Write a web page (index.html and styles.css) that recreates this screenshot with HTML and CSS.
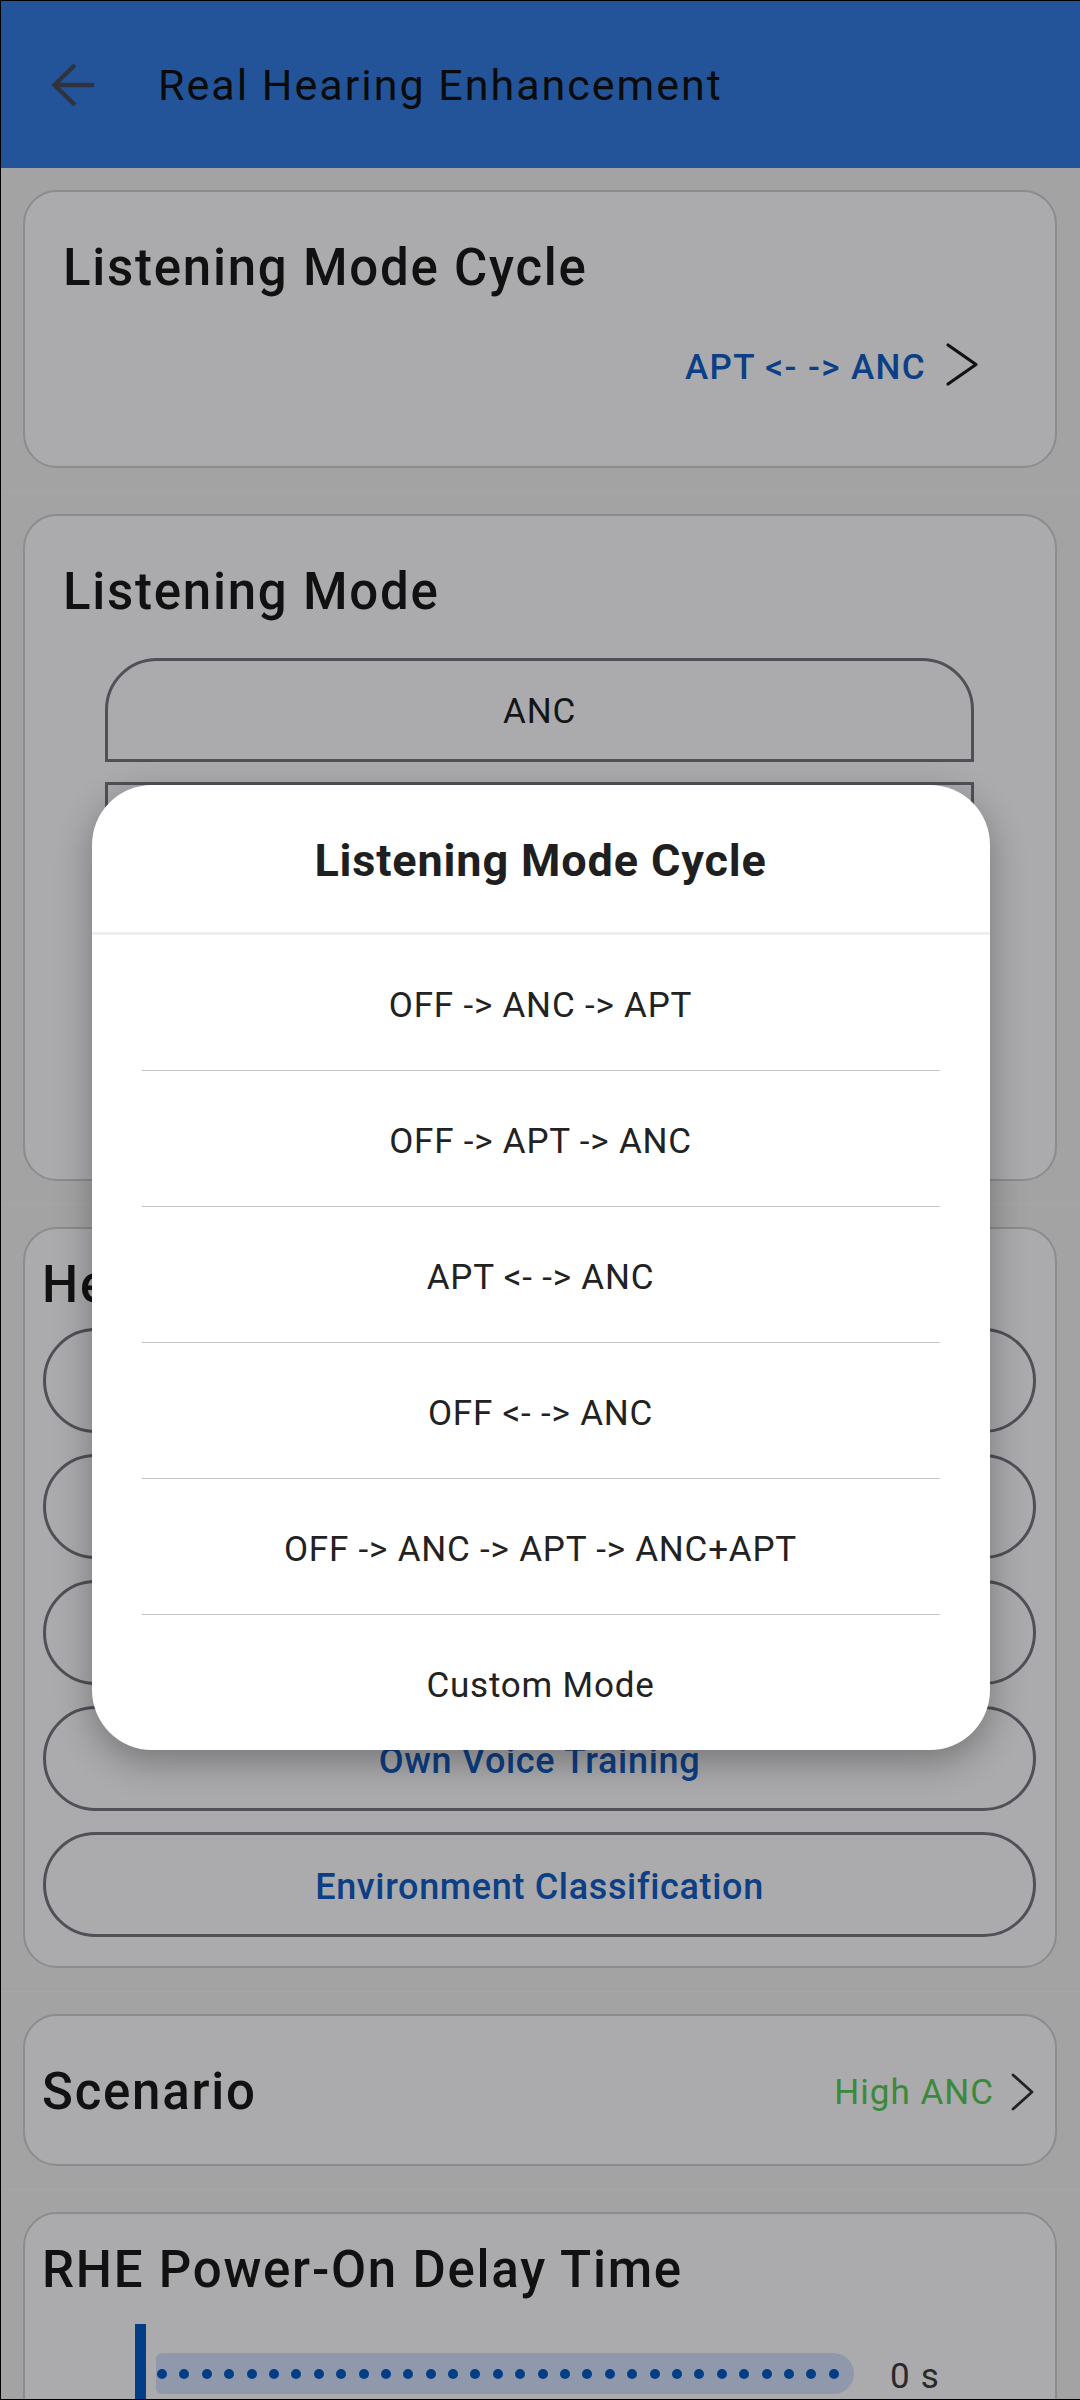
FILE: index.html
```html
<!DOCTYPE html>
<html lang="en">
<head>
<meta charset="utf-8">
<title>Real Hearing Enhancement</title>
<link rel="stylesheet" href="styles.css">
</head>
<body>
<div class="screen">
  <header class="appbar">
    <button class="back" aria-label="Back">
      <svg width="48" height="48" viewBox="0 0 48 48"><path d="M45 24H5M26 4L5.5 24L26 44" fill="none" stroke="currentColor" stroke-width="4.5"/></svg>
    </button>
    <h1 class="appbar-title">Real Hearing Enhancement</h1>
  </header>

  <main class="list">
    <section class="item">
      <div class="card card-cycle">
        <h2 class="card-title">Listening Mode Cycle</h2>
        <div class="value-row">
          <span class="value value-blue">APT &lt;- -&gt; ANC</span>
          <svg class="chevron-lg" width="34" height="50" viewBox="0 0 34 50"><polyline points="3,5 31,24.5 3,44" fill="none" stroke="currentColor" stroke-width="3.2" stroke-linecap="round" stroke-linejoin="round"/></svg>
        </div>
      </div>
    </section>

    <section class="item">
      <div class="card card-mode">
        <h2 class="card-title">Listening Mode</h2>
        <div class="segments">
          <div class="segment segment-first">ANC</div>
          <div class="segment">APT</div>
          <div class="segment">ANC+APT</div>
          <div class="segment segment-last">OFF</div>
        </div>
      </div>
    </section>

    <section class="item">
      <div class="card card-hearing">
        <h2 class="card-title">Hearing Enhancement</h2>
        <div class="pills">
          <button class="pill">Hearing Test</button>
          <button class="pill">Hearing Profile</button>
          <button class="pill">Speech Enhancement</button>
          <button class="pill">Own Voice Training</button>
          <button class="pill">Environment Classification</button>
        </div>
      </div>
    </section>

    <section class="item">
      <div class="card card-scenario">
        <h2 class="card-title">Scenario</h2>
        <div class="value-inline">
          <span class="value value-green">High ANC</span>
          <svg class="chevron-sm" width="28" height="44" viewBox="0 0 28 44"><polyline points="5,5 24,22 5,39" fill="none" stroke="currentColor" stroke-width="2.8" stroke-linecap="round" stroke-linejoin="round"/></svg>
        </div>
      </div>
    </section>

    <section class="item">
      <div class="card card-delay">
        <h2 class="card-title">RHE Power-On Delay Time</h2>
        <div class="slider">
          <div class="slider-thumb"></div>
          <div class="slider-track">
            <span class="tick"></span><span class="tick"></span><span class="tick"></span><span class="tick"></span><span class="tick"></span><span class="tick"></span><span class="tick"></span><span class="tick"></span><span class="tick"></span><span class="tick"></span><span class="tick"></span><span class="tick"></span><span class="tick"></span><span class="tick"></span><span class="tick"></span><span class="tick"></span><span class="tick"></span><span class="tick"></span><span class="tick"></span><span class="tick"></span><span class="tick"></span><span class="tick"></span><span class="tick"></span><span class="tick"></span><span class="tick"></span><span class="tick"></span><span class="tick"></span><span class="tick"></span><span class="tick"></span><span class="tick"></span><span class="tick"></span>
          </div>
          <span class="slider-value">0 s</span>
        </div>
      </div>
    </section>
  </main>

  <div class="scrim">
    <div class="dialog" role="dialog" aria-label="Listening Mode Cycle">
      <h2 class="dialog-title">Listening Mode Cycle</h2>
      <ul class="options">
        <li class="option">OFF -&gt; ANC -&gt; APT</li>
        <li class="option">OFF -&gt; APT -&gt; ANC</li>
        <li class="option">APT &lt;- -&gt; ANC</li>
        <li class="option">OFF &lt;- -&gt; ANC</li>
        <li class="option">OFF -&gt; ANC -&gt; APT -&gt; ANC+APT</li>
        <li class="option">Custom Mode</li>
      </ul>
    </div>
  </div>
</div>
</body>
</html>
```

FILE: styles.css
```css
* {
  box-sizing: border-box;
  margin: 0;
  padding: 0;
}

html,
body {
  width: 1080px;
  height: 2400px;
}

body {
  background: #000;
  font-family: Roboto, "Noto Sans", "Liberation Sans", sans-serif;
  overflow: hidden;
}

.screen {
  position: relative;
  margin: 1px 0 1px 1px;
  width: 1079px;
  height: 2398px;
  background: #f0f0f0;
  overflow: hidden;
}

/* ---------- app bar ---------- */
.appbar {
  height: 167px;
  background: #347de2;
  display: flex;
  align-items: center;
  padding-left: 48px;
}

.back {
  width: 48px;
  height: 48px;
  border: 0;
  background: none;
  color: #454c5e;
  display: flex;
}

.appbar-title {
  margin-left: 61px;
  font-size: 43px;
  line-height: 52px;
  font-weight: 400;
  letter-spacing: 2px;
  color: #111;
}

/* ---------- settings list ---------- */
.item {
  padding: 22px 23px 23px 22px;
  border-bottom: 1px solid #f7f7f7;
}

.card {
  background: #fdfcff;
  border: 2px solid #cecdd4;
  border-radius: 34px;
}

.card-title {
  font-size: 51px;
  line-height: 60px;
  font-weight: 500;
  letter-spacing: 1.75px;
  color: #1a1a1a;
  white-space: nowrap;
}

.value {
  font-size: 35px;
  line-height: 50px;
  padding-top: 6px;
  white-space: nowrap;
}

.value-blue {
  color: #125dc4;
  font-weight: 500;
  letter-spacing: 1.4px;
}

.value-green {
  color: #58cb58;
  font-weight: 400;
  letter-spacing: 1px;
}

/* listening mode cycle */
.card-cycle {
  padding: 46px 76px 76px 38px;
}

.value-row {
  margin-top: 42px;
  height: 50px;
  display: flex;
  justify-content: flex-end;
  align-items: center;
}

.chevron-lg {
  margin-left: 19px;
  color: #1a1a1a;
}

/* listening mode segments */
.card-mode {
  padding: 46px 81px 45px 38px;
}

.segments {
  margin: 36px 0 0 42px;
  display: flex;
  flex-direction: column;
  gap: 20px;
}

.segment {
  height: 104px;
  padding-top: 3px;
  border: 3px solid #757682;
  display: flex;
  align-items: center;
  justify-content: center;
  font-size: 35px;
  letter-spacing: 0.8px;
  color: #1f1f1f;
}

.segment-first {
  border-radius: 52px 52px 0 0;
}

.segment-last {
  border-radius: 0 0 52px 52px;
}

/* hearing enhancement actions */
.card-hearing {
  padding: 26px 19px 29px 17px;
}

.pills {
  margin: 13px 0 0 1px;
  display: flex;
  flex-direction: column;
  gap: 21px;
}

.pill {
  height: 105px;
  padding-top: 5px;
  border: 3px solid #757682;
  border-radius: 53px;
  background: none;
  font-family: inherit;
  font-size: 36px;
  font-weight: 500;
  letter-spacing: 0.65px;
  color: #125dc4;
}

/* scenario */
.card-scenario {
  height: 152px;
  padding: 4px 19px 0 17px;
  display: flex;
  align-items: center;
  justify-content: space-between;
}

.card-scenario .value {
  padding-top: 2px;
}

.value-inline {
  display: flex;
  align-items: center;
}

.chevron-sm {
  margin-left: 14px;
  color: #333;
}

/* power-on delay slider */
.card-delay {
  padding: 26px 0 0 17px;
  height: 260px;
}

.slider {
  margin-top: 24px;
  display: flex;
  align-items: flex-start;
}

.slider-thumb {
  width: 11px;
  height: 100px;
  margin-left: 93px;
  background: #045bc5;
}

.slider-track {
  margin: 29px 0 0 10px;
  width: 698px;
  height: 41px;
  border-radius: 6px 21px 21px 6px;
  background: #d4e1fe;
  display: flex;
  align-items: center;
  justify-content: space-between;
  padding: 0 15px 0 1px;
}

.tick {
  width: 10px;
  height: 10px;
  border-radius: 50%;
  background: #045bc5;
}

.slider-value {
  margin: 32px 0 0 36px;
  font-size: 35px;
  line-height: 41px;
  letter-spacing: 1.2px;
  color: #3e3e3e;
}

/* ---------- modal dialog ---------- */
.scrim {
  position: absolute;
  inset: 0;
  background: rgba(0, 0, 0, 0.32);
  display: flex;
  justify-content: center;
  align-items: flex-start;
  padding-top: 784px;
}

.dialog {
  width: 898px;
  background: #fff;
  border-radius: 60px;
  overflow: hidden;
  box-shadow: 0 12px 36px rgba(0, 0, 0, 0.3);
}

.dialog-title {
  height: 150px;
  padding-top: 4px;
  border-bottom: 3px solid #efefef;
  display: flex;
  align-items: center;
  justify-content: center;
  font-size: 45px;
  font-weight: 700;
  letter-spacing: 0.85px;
  color: #1f1f1f;
}

.options {
  list-style: none;
}

.option {
  height: 135px;
  margin: 0 50px;
  padding-top: 6px;
  display: flex;
  align-items: center;
  justify-content: center;
  font-size: 35px;
  letter-spacing: 0.8px;
  color: #222;
}

.option + .option {
  height: 136px;
  border-top: 1px solid #c4c4c4;
}
```
